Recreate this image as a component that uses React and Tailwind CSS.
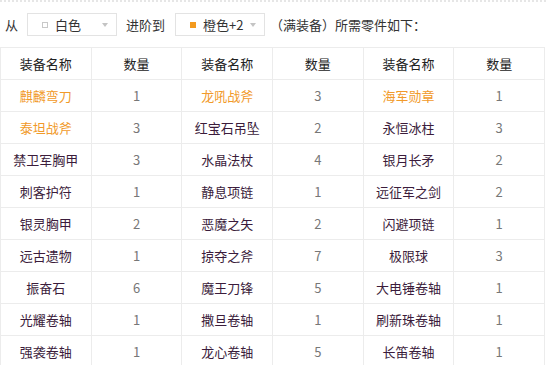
import React from 'react';

const rows = [
  [['麒麟弯刀', 'o'], 1, ['龙吼战斧', 'o'], 3, ['海军勋章', 'o'], 1],
  [['泰坦战斧', 'o'], 3, ['红宝石吊坠'], 2, ['永恒冰柱'], 3],
  [['禁卫军胸甲'], 3, ['水晶法杖'], 4, ['银月长矛'], 2],
  [['刺客护符'], 1, ['静息项链'], 1, ['远征军之剑'], 2],
  [['银灵胸甲'], 2, ['恶魔之矢'], 2, ['闪避项链'], 1],
  [['远古遗物'], 1, ['掠夺之斧'], 7, ['极限球'], 3],
  [['振奋石'], 6, ['魔王刀锋'], 5, ['大电锤卷轴'], 1],
  [['光耀卷轴'], 1, ['撒旦卷轴'], 1, ['刷新珠卷轴'], 1],
  [['强袭卷轴'], 1, ['龙心卷轴'], 5, ['长笛卷轴'], 1],
];

const Select = ({ dot, label }) => (
  <div className="flex items-center w-[90px] h-[23px] border border-[#e3e3e3] bg-white pl-[14px] pr-[8px]">
    {dot ? (
      <span className="w-[6px] h-[6px] bg-[#f39a1e] mr-[7px]" />
    ) : (
      <span className="w-[6px] h-[6px] border border-[#c8c8c8] mr-[7px]" />
    )}
    <span className="text-[13px] text-[#333]">{label}</span>
    <span className="ml-auto w-0 h-0 border-l-[3px] border-r-[3px] border-t-[4px] border-l-transparent border-r-transparent border-t-[#c4c4c4]" />
  </div>
);

export default function App() {
  return (
    <div className="w-[546px] h-[365px] overflow-hidden bg-white" style={{ fontFamily: '"Noto Sans CJK SC", "Noto Sans", sans-serif' }}>
      <div className="border-t-2 border-dotted border-[#e6e6e6]" />
      <div className="flex items-center h-[36px] pt-[9px] pl-[5px] text-[13px] text-[#333]">
        <span className="mr-[9px]">从</span>
        <Select label="白色" />
        <span className="ml-[9px] mr-[10px]">进阶到</span>
        <Select dot label="橙色+2" />
        <span className="ml-[5px]">（满装备）所需零件如下：</span>
      </div>
      <table className="mt-[9px] w-[545px] table-fixed border-collapse text-[13px]">
        <thead>
          <tr className="h-[32px]">
            {['装备名称', '数量', '装备名称', '数量', '装备名称', '数量'].map((h, i) => (
              <th key={i} className="border border-[#ececec] font-normal text-[#222] text-center">{h}</th>
            ))}
          </tr>
        </thead>
        <tbody>
          {rows.map((r, ri) => (
            <tr key={ri} className="h-[32px]">
              {r.map((c, ci) =>
                Array.isArray(c) ? (
                  <td key={ci} className={`border border-[#ececec] text-center ${c[1] ? 'text-[#f19a2a]' : 'text-[#3b1c3b]'}`}>{c[0]}</td>
                ) : (
                  <td key={ci} className="border border-[#ececec] text-center text-[#777]">{c}</td>
                )
              )}
            </tr>
          ))}
        </tbody>
      </table>
    </div>
  );
}
